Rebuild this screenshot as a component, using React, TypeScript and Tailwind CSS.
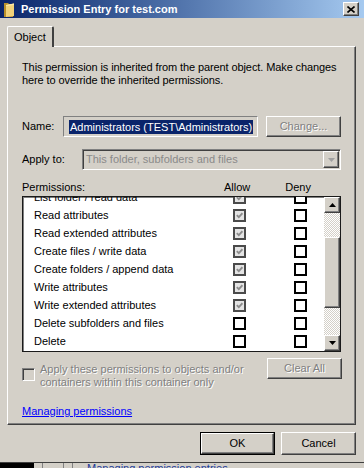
import React from 'react'

const raised =
  'border border-t-white border-l-white border-r-[#404040] border-b-[#404040] shadow-[inset_-1px_-1px_#808080]'
const disabledText = 'text-[#808080] [text-shadow:1px_1px_0_#ffffff]'
const checker =
  'bg-[repeating-conic-gradient(#ffffff_0%_25%,#d4d0c8_0%_50%)] bg-[length:2px_2px]'

const rows: [string, boolean][] = [
  ['List folder / read data', true],
  ['Read attributes', true],
  ['Read extended attributes', true],
  ['Create files / write data', true],
  ['Create folders / append data', true],
  ['Write attributes', true],
  ['Write extended attributes', true],
  ['Delete subfolders and files', false],
  ['Delete', false]
]

const CheckBox: React.FC<{ checked?: boolean }> = ({ checked = false }) => {
  return (
    <div
      className={`flex h-[13px] w-[13px] shrink-0 items-center justify-center border-2 ${
        checked ? 'border-[#4a4a4a] bg-[#e4e4e4]' : 'border-black bg-white'
      }`}
    >
      {checked && (
        <svg width="7" height="7" viewBox="0 0 7 7">
          <path d="M0.8 3.2l2 2 3.6-4" stroke="#8c8c8c" strokeWidth="1.8" fill="none" />
        </svg>
      )}
    </div>
  )
}

const Arrow: React.FC<{ down?: boolean; color?: string }> = ({ down, color = '#000' }) => (
  <svg width="7" height="4" viewBox="0 0 7 4">
    <path d={down ? 'M0 0h7L3.5 4z' : 'M0 4h7L3.5 0z'} fill={color} />
  </svg>
)

export default function App() {
  return (
    <div className="flex h-[468px] w-[364px] flex-col overflow-hidden bg-[#d4d0c8] font-['Liberation_Sans',Arial,sans-serif] text-[11px] leading-[13px] text-black">
      {/* title bar */}
      <div className="flex h-[18px] shrink-0 items-center bg-linear-to-r from-[#0a246a] to-[#a6caf0] pl-[4px] pr-[5px]">
        <svg width="11" height="15" viewBox="0 0 11 15">
          <path d="M0 1h4l1 1h4v13H0z" fill="#b8902c" />
          <path d="M2 3l8-1.5V14l-8 1z" fill="#f1d27a" />
          <path d="M2 3l8-1.5v1.5l-8 1z" fill="#fbe8a8" />
        </svg>
        <span className="ml-[6px] text-[11px] font-bold text-white">Permission Entry for test.com</span>
        <div className={`ml-auto flex h-[14px] w-[16px] items-center justify-center bg-[#d4d0c8] ${raised}`}>
          <svg width="8" height="7" viewBox="0 0 8 7">
            <path d="M0.5 0.5l7 6M7.5 0.5l-7 6" stroke="#000" strokeWidth="1.6" />
          </svg>
        </div>
      </div>

      {/* tab */}
      <div className="ml-[7px] mt-[8px] flex">
        <div className="relative z-10 -mb-px flex h-[21px] w-[47px] items-center rounded-t-[2px] border-l border-t border-r-2 border-l-white border-t-white border-r-[#404040] bg-[#d4d0c8] pl-[6px]">
          Object
        </div>
      </div>

      {/* panel */}
      <div className="ml-[7px] h-[379px] w-[349px] shrink-0 border-l border-t border-r border-b border-l-white border-t-white border-r-[#404040] border-b-[#404040] pl-[14px] shadow-[inset_-1px_-1px_#808080]">
        <p className="mt-[14px] w-[332px] tracking-[-0.1px]">
          This permission is inherited from the parent object. Make changes here to override the inherited
          permissions.
        </p>

        <div className="mt-[29px] flex h-[21px] items-center">
          <span className="w-[41px]">Name:</span>
          <div className="flex h-[21px] w-[195px] items-center border border-t-[#808080] border-l-[#808080] border-r-white border-b-white pl-[5px]">
            <span className="bg-[#0a246a] px-[1px] leading-[14px] text-white">Administrators (TEST\Administrators)</span>
          </div>
          <div className={`ml-[8px] flex h-[21px] w-[75px] items-center justify-center ${raised} ${disabledText}`}>
            Change...
          </div>
        </div>

        <div className="mt-[12px] flex h-[21px] items-center">
          <span className="w-[60px]">Apply to:</span>
          <div className="flex h-[21px] w-[259px] items-center border border-t-[#808080] border-l-[#808080] border-r-white border-b-white pl-[3px] pr-[1px] shadow-[inset_1px_1px_#404040]">
            <span className="text-[#8a8a8a]">This folder, subfolders and files</span>
            <div className={`ml-auto flex h-[17px] w-[16px] items-center justify-center bg-[#d4d0c8] ${raised}`}>
              <Arrow down color="#a0a0a0" />
            </div>
          </div>
        </div>

        <div className="mt-[11px] flex h-[13px]">
          <span className="w-[202px]">Permissions:</span>
          <span>Allow</span>
          <span className="ml-[35px]">Deny</span>
        </div>

        <div className="mt-[2px] flex h-[156px] w-[319px] overflow-hidden border border-[#1a1a1a] bg-white shadow-[inset_1px_1px_#808080]">
          <div className="flex-1 overflow-hidden">
            <div className="-mt-[9px]">
              {rows.map(([label, allow]) => (
                <div key={label} className="flex h-[18px] items-center pl-[11px]">
                  <span className="w-[199px]">{label}</span>
                  <CheckBox checked={allow} />
                  <div className="ml-[48px]">
                    <CheckBox />
                  </div>
                </div>
              ))}
            </div>
          </div>
          <div className="flex w-[16px] flex-col">
            <div className={`flex h-[16px] shrink-0 items-center justify-center bg-[#d4d0c8] ${raised}`}>
              <Arrow />
            </div>
            <div className={`h-[24px] shrink-0 ${checker}`} />
            <div className={`h-[71px] shrink-0 bg-[#d4d0c8] ${raised}`} />
            <div className={`flex-1 ${checker}`} />
            <div className={`flex h-[16px] shrink-0 items-center justify-center bg-[#d4d0c8] ${raised}`}>
              <Arrow down />
            </div>
          </div>
        </div>

        <div className="mt-[6px] flex items-start">
          <div className="mt-[5px] flex">
            <div className="mt-[5px] h-[13px] w-[13px] shrink-0 border border-t-[#808080] border-l-[#808080] border-r-white border-b-white shadow-[inset_1px_1px_#404040]" />
            <span className={`ml-[5px] w-[225px] ${disabledText}`}>
              Apply these permissions to objects and/or containers within this container only
            </span>
          </div>
          <div className={`ml-auto mr-[13px] flex h-[21px] w-[75px] items-center justify-center ${raised} ${disabledText}`}>
            Clear All
          </div>
        </div>

        <a className="mt-[16px] block w-fit text-[#0000ff] underline">Managing permissions</a>
      </div>

      {/* dialog buttons */}
      <div className="mt-[7px] flex h-[23px] pl-[200px]">
        <div className="h-[23px] w-[75px] border border-black">
          <div className={`flex h-full items-center justify-center ${raised}`}>OK</div>
        </div>
        <div className={`ml-[6px] flex h-[23px] w-[75px] items-center justify-center ${raised}`}>Cancel</div>
      </div>

      {/* window edge and window behind */}
      <div className="mt-[7px] h-px shrink-0 bg-[#404040]" />
      <div className="flex h-[6px] shrink-0 overflow-hidden">
        <div className="w-[34px] bg-black" />
        <div className="ml-[8px] w-px bg-[#808080]" />
        <div className="ml-[20px] w-px bg-[#808080]" />
        <div className="ml-[8px] w-px bg-[#808080]" />
        <span className="-mt-[1px] ml-[14px] text-[#1a3a9a] underline">Managing permission entries</span>
      </div>
    </div>
  )
}
